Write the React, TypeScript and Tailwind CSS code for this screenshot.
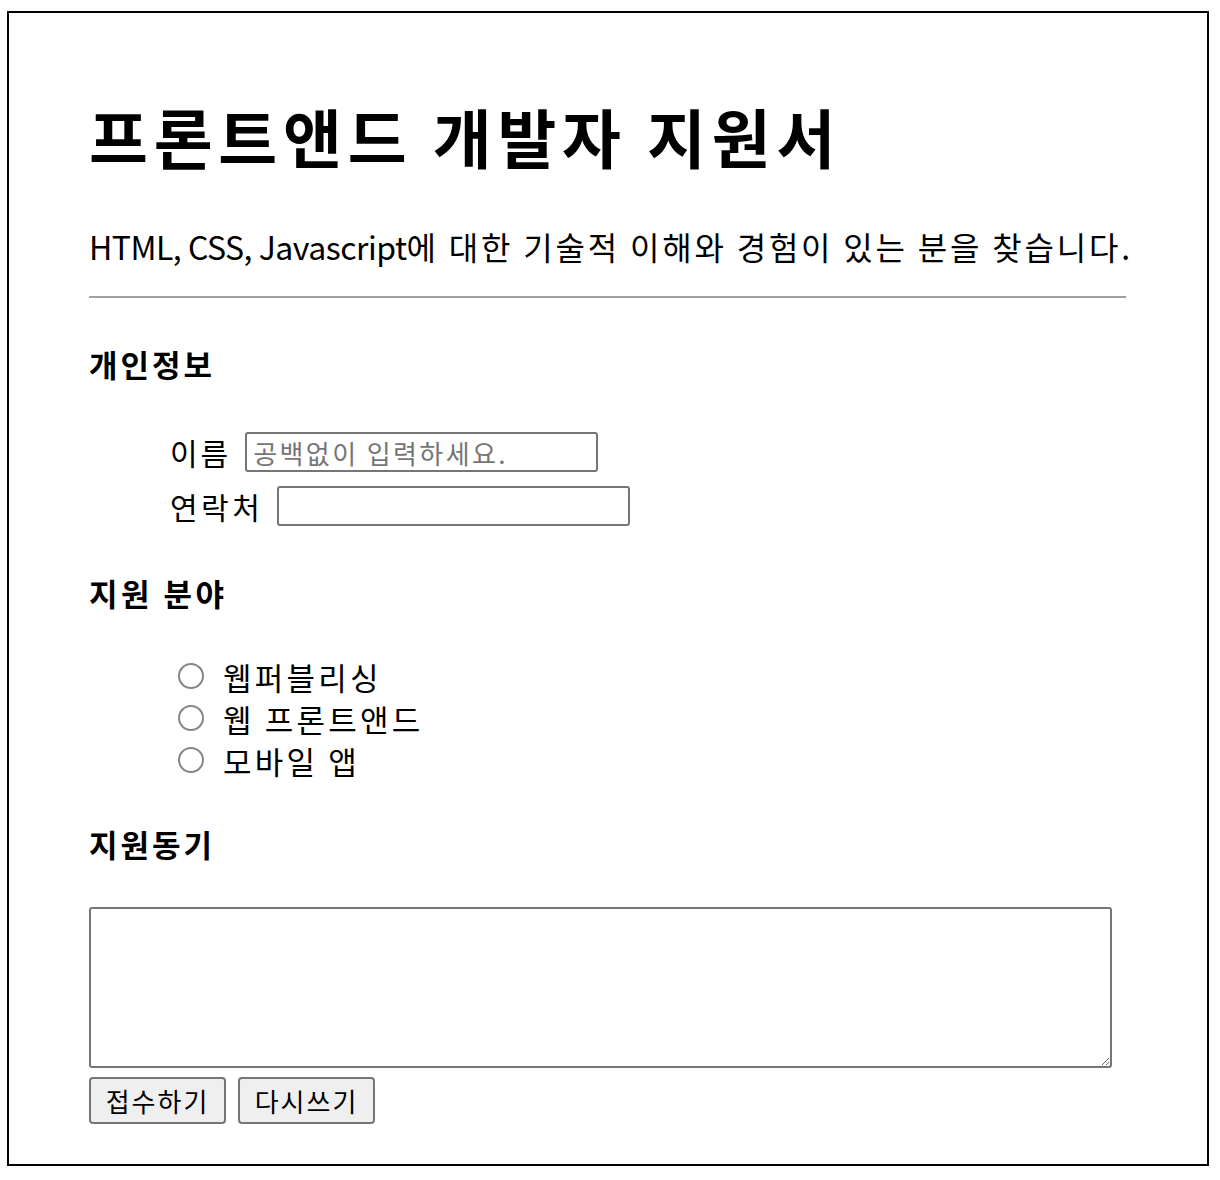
/* 프론트앤드 개발자 지원서 — plain form page */
const FIELDS = ["웹퍼블리싱", "웹 프론트앤드", "모바일 앱"];

export default function App() {
  return (
    <div
      className="bg-white min-h-screen pl-[7px] pt-[11px] text-black"
      style={{ fontFamily: '"Noto Sans CJK KR", "Noto Sans", sans-serif' }}
    >
      <div className="w-[1202px] h-[1155px] border-2 border-black pl-[80px] flex flex-col">
        {/* Title */}
        <h1 className="mt-[90px] h-[64px] flex items-center text-[64px] font-bold leading-none tracking-[5.8px]">
          프론트앤드 개발자 지원서
        </h1>

        <p className="mt-[63px] h-[32px] flex items-center text-[32px] leading-none whitespace-pre">
          <span className="tracking-[-0.5px]">HTML, CSS, Javascript</span>
          <span className="tracking-[2.8px]">에 대한 기술적 이해와 경험이 있는 분을 찾습니다.</span>
        </p>

        <hr className="mt-[34px] w-[1037px] border-0 h-[2px] bg-[#a0a0a0]" />

        {/* 개인정보 */}
        <h3 className="mt-[49px] h-[32px] flex items-center text-[31px] font-bold leading-none tracking-[3px]">
          개인정보
        </h3>

        <div className="ml-[81px] mt-[53px] flex flex-col gap-[14px]">
          <label className="flex items-center gap-[14px] h-[40px]">
            <span className="text-[30px] leading-none tracking-[3px]">이름</span>
            <input
              type="text"
              placeholder="공백없이 입력하세요."
              className="w-[353px] h-[40px] border-2 border-[#767676] rounded-[3px] px-[6px] text-[26px] tracking-[2.4px] placeholder:text-[#757575] outline-none"
            />
          </label>
          <label className="flex items-center gap-[14px] h-[40px]">
            <span className="text-[30px] leading-none tracking-[3.5px]">연락처</span>
            <input
              type="text"
              className="w-[353px] h-[40px] border-2 border-[#767676] rounded-[3px] px-[6px] text-[26px] outline-none"
            />
          </label>
        </div>

        {/* 지원 분야 */}
        <h3 className="mt-[50px] h-[32px] flex items-center text-[31px] font-bold leading-none tracking-[3.5px]">
          지원 분야
        </h3>

        <div className="ml-[89px] mt-[47px] flex flex-col">
          {FIELDS.map((f) => (
            <label key={f} className="flex items-center h-[42px]">
              <input
                type="radio"
                name="field"
                className="appearance-none w-[26px] h-[26px] rounded-full border-2 border-[#858585] bg-white m-0"
              />
              <span className="ml-[19px] text-[31px] leading-none tracking-[3.2px]">{f}</span>
            </label>
          ))}
        </div>

        {/* 지원동기 */}
        <h3 className="mt-[46px] h-[32px] flex items-center text-[31px] font-bold leading-none tracking-[3px]">
          지원동기
        </h3>

        <textarea className="mt-[48px] w-[1023px] h-[161px] border-2 border-[#767676] rounded-[3px] outline-none resize" />

        <div className="mt-[9px] flex gap-[12px]">
          <button className="w-[137px] h-[47px] bg-[#efefef] border-2 border-[#767676] rounded-[4px] text-[26px] leading-none tracking-[2px]">
            접수하기
          </button>
          <button className="w-[137px] h-[47px] bg-[#efefef] border-2 border-[#767676] rounded-[4px] text-[26px] leading-none tracking-[2px]">
            다시쓰기
          </button>
        </div>
      </div>
    </div>
  );
}
